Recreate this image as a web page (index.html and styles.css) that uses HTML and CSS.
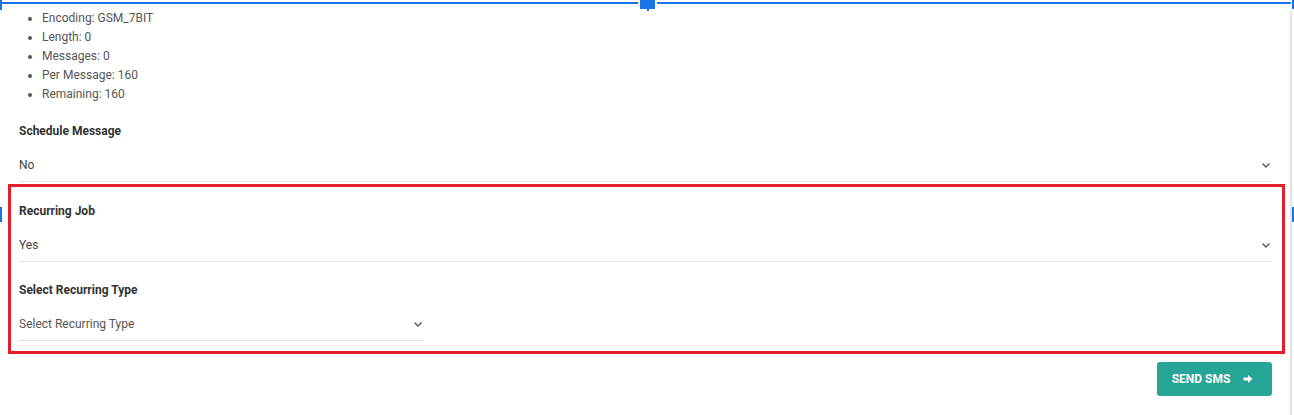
FILE: index.html
```html
<!DOCTYPE html>
<html lang="en">
<head>
    <meta charset="UTF-8">
    <meta name="viewport" content="width=device-width, initial-scale=1.0">
    <title>Send SMS</title>
    <link rel="stylesheet" href="styles.css">
</head>
<body>
    <div class="frame">
        <div class="card">
            <ul class="sms-info">
                <li>Encoding: GSM_7BIT</li>
                <li>Length: 0</li>
                <li>Messages: 0</li>
                <li>Per Message: 160</li>
                <li>Remaining: 160</li>
            </ul>

            <div class="field first">
                <label class="field-label">Schedule Message</label>
                <div class="select">
                    <span>No</span>
                    <svg class="chevron" width="8" height="5" viewBox="0 0 8 5"><polyline points="0.5,0.5 4,4 7.5,0.5" fill="none" stroke="#555" stroke-width="1.3"/></svg>
                </div>
            </div>

            <div class="highlight">
                <div class="field">
                    <label class="field-label">Recurring Job</label>
                    <div class="select">
                        <span>Yes</span>
                        <svg class="chevron" width="8" height="5" viewBox="0 0 8 5"><polyline points="0.5,0.5 4,4 7.5,0.5" fill="none" stroke="#555" stroke-width="1.3"/></svg>
                    </div>
                </div>
                <div class="field">
                    <label class="field-label">Select Recurring Type</label>
                    <div class="select select-small">
                        <span>Select Recurring Type</span>
                        <svg class="chevron" width="8" height="5" viewBox="0 0 8 5"><polyline points="0.5,0.5 4,4 7.5,0.5" fill="none" stroke="#555" stroke-width="1.3"/></svg>
                    </div>
                </div>
            </div>

            <div class="actions">
                <button class="send-button">
                    SEND SMS
                    <svg width="10" height="10" viewBox="0 0 10 10"><path d="M0.5 3.6 H5 V1 L9.5 5 L5 9 V6.4 H0.5 Z" fill="#fff"/></svg>
                </button>
            </div>
        </div>

        <!-- selection handles of the editor -->
        <div class="sel-line"></div>
        <div class="handle handle-top"></div>
        <div class="handle handle-left"></div>
        <div class="handle handle-right"></div>
        <div class="handle handle-corner-left"></div>
        <div class="handle handle-corner-right"></div>
    </div>
</body>
</html>
```

FILE: styles.css
```css
* {
    margin: 0;
    padding: 0;
    box-sizing: border-box;
}

body {
    font-family: Roboto, 'Liberation Sans', sans-serif;
    font-size: 12px;
    background: #fff;
    color: #444;
}

.frame {
    position: relative;
    width: 1294px;
    height: 415px;
    overflow: hidden;
}

.sel-line {
    position: absolute;
    top: 2px;
    left: 0;
    right: 3px;
    height: 2px;
    background: #1a73e8;
}

.handle {
    position: absolute;
    background: #1a73e8;
}

.handle-top {
    top: 0;
    left: 640px;
    width: 15px;
    height: 9px;
    box-shadow: 0 0 0 2px #fff;
}

.handle-top::after {
    content: '';
    position: absolute;
    left: 7px;
    top: 9px;
    width: 2px;
    height: 2px;
    background: #1a73e8;
}

.handle-left {
    left: 0;
    top: 207px;
    width: 2px;
    height: 15px;
}

.handle-right {
    right: 0;
    top: 207px;
    width: 2px;
    height: 15px;
}

.handle-corner-left {
    left: 0;
    top: 0;
    width: 2px;
    height: 10px;
}

.handle-corner-right {
    right: 0;
    top: 0;
    width: 2px;
    height: 9px;
}

.card {
    position: relative;
    height: 415px;
    margin-right: 4px;
    padding: 0 18px 0 19px;
    background: #fff;
}

/* right edge of the card, starts below the selection line */
.card::after {
    content: '';
    position: absolute;
    top: 11px;
    bottom: 0;
    right: -2px;
    width: 2px;
    background: #e4e4e4;
}

.sms-info {
    list-style: disc;
    padding-left: 23px;
    padding-top: 9px;
    color: #555;
    line-height: 19px;
}

.field {
    margin-top: 19px;
}

.field.first {
    margin-top: 18px;
}

.field-label {
    display: block;
    font-weight: bold;
    color: #333;
    line-height: 19px;
    margin-bottom: 7px;
}

.select {
    display: flex;
    justify-content: space-between;
    align-items: center;
    height: 34px;
    border-bottom: 1px solid #e2e2e2;
    color: #444;
    padding-right: 2px;
}

.select-small {
    width: 405px;
    color: #555;
}

.chevron {
    margin-top: 1px;
}

.highlight {
    margin: 2px -13px 0 -11px;
    border: 3px solid #e41f2b;
    padding: 15px 10px 10px 8px;
}

.highlight .field:first-child {
    margin-top: 0;
}

.actions {
    display: flex;
    justify-content: flex-end;
    margin-top: 8px;
}

.send-button {
    display: flex;
    align-items: center;
    justify-content: center;
    gap: 13px;
    width: 115px;
    height: 34px;
    background: #26a596;
    color: #fff;
    border: none;
    border-radius: 3px;
    font-family: Roboto, 'Liberation Sans', sans-serif;
    font-size: 12px;
    font-weight: bold;
    padding-right: 4px;
    cursor: pointer;
}
```
